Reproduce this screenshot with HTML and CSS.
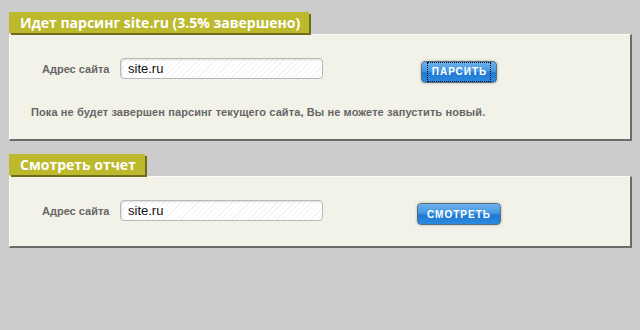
FILE: index.html
```html
<!DOCTYPE html>
<html lang="ru">
<head>
    <meta charset="UTF-8">
    <title>Парсинг сайта</title>
    <link rel="stylesheet" href="styles.css">
</head>
<body>
    <div class="block">
        <div class="block-title">Идет парсинг site.ru (3.5% завершено)</div>
        <div class="block-body">
            <div class="form-row">
                <label class="form-label">Адрес сайта</label>
                <input class="form-input" type="text" value="site.ru">
                <div class="form-action">
                    <button class="blue-button"><span class="focus-ring">Парсить</span></button>
                </div>
            </div>
            <p class="notice">Пока не будет завершен парсинг текущего сайта, Вы не можете запустить новый.</p>
        </div>
    </div>

    <div class="block block-report">
        <div class="block-title">Смотреть отчет</div>
        <div class="block-body block-body-short">
            <div class="form-row">
                <label class="form-label">Адрес сайта</label>
                <input class="form-input" type="text" value="site.ru">
                <div class="form-action">
                    <button class="blue-button wide">Смотреть</button>
                </div>
            </div>
        </div>
    </div>
</body>
</html>
```

FILE: styles.css
```css
body {
    margin: 12px 8px 0 9px;
    background: #cccccc;
    font-family: "Liberation Sans", Arial, sans-serif;
}

.block {
    margin-bottom: 13px;
}

.block-title {
    display: inline-block;
    background: #bcb92d;
    color: #fff;
    font-family: "Open Sans", sans-serif;
    font-weight: 700;
    font-size: 14px;
    line-height: 21px;
    height: 21px;
    padding: 0 9px 0 11px;
    box-shadow: 2px 2px 0 #6f6d1c;
    vertical-align: top;
}

.block-body {
    margin-top: 1px;
    background: #f2f2e8;
    border-top: 1px solid #fbfbf6;
    border-left: 1px solid #fbfbf6;
    border-right: 2px solid #6b6b6b;
    border-bottom: 2px solid #6b6b6b;
    padding: 23px 0 0 0;
    height: 81px;
}

.block-body-short {
    padding-top: 23px;
    height: 46px;
}

.form-row {
    display: flex;
    align-items: flex-start;
}

.form-label {
    width: 78px;
    padding-left: 32px;
    padding-top: 5px;
    color: #666;
    font-size: 11px;
    font-weight: 700;
}

.form-input {
    width: 194px;
    height: 19px;
    margin: 0;
    padding: 0 0 0 7px;
    border: 1px solid #b8b8b8;
    border-radius: 4px;
    box-shadow: inset 1px 1px 2px rgba(0, 0, 0, 0.12);
    background: repeating-linear-gradient(135deg, #fff 0, #fff 3px, #f3f3f3 3px, #f3f3f3 4px);
    font-family: "Liberation Sans", Arial, sans-serif;
    font-size: 13px;
    color: #111;
    outline: none;
}

.form-action {
    width: 272px;
    display: flex;
    justify-content: center;
    padding-top: 3px;
}

.blue-button {
    height: 22px;
    width: 76px;
    padding: 0;
    border: 1px solid #5a6f86;
    border-radius: 4px;
    background: linear-gradient(#6fb2ee 0%, #4597e2 45%, #1f78d2 55%, #2d8ae0 100%);
    box-shadow: 0 0 2px 1px rgba(120, 120, 100, 0.25);
    color: #fff;
    font-family: "Liberation Sans", Arial, sans-serif;
    font-weight: 700;
    font-size: 10px;
    letter-spacing: 1px;
    text-transform: uppercase;
    cursor: pointer;
}

.blue-button.wide {
    width: 84px;
}

.focus-ring {
    display: inline-block;
    padding: 3px 3px 4px 4px;
    border: 1px dotted #000;
}

.notice {
    margin: 23px 0 0 21px;
    color: #666;
    font-size: 11px;
    font-weight: 700;
    letter-spacing: 0.1px;
}
```
